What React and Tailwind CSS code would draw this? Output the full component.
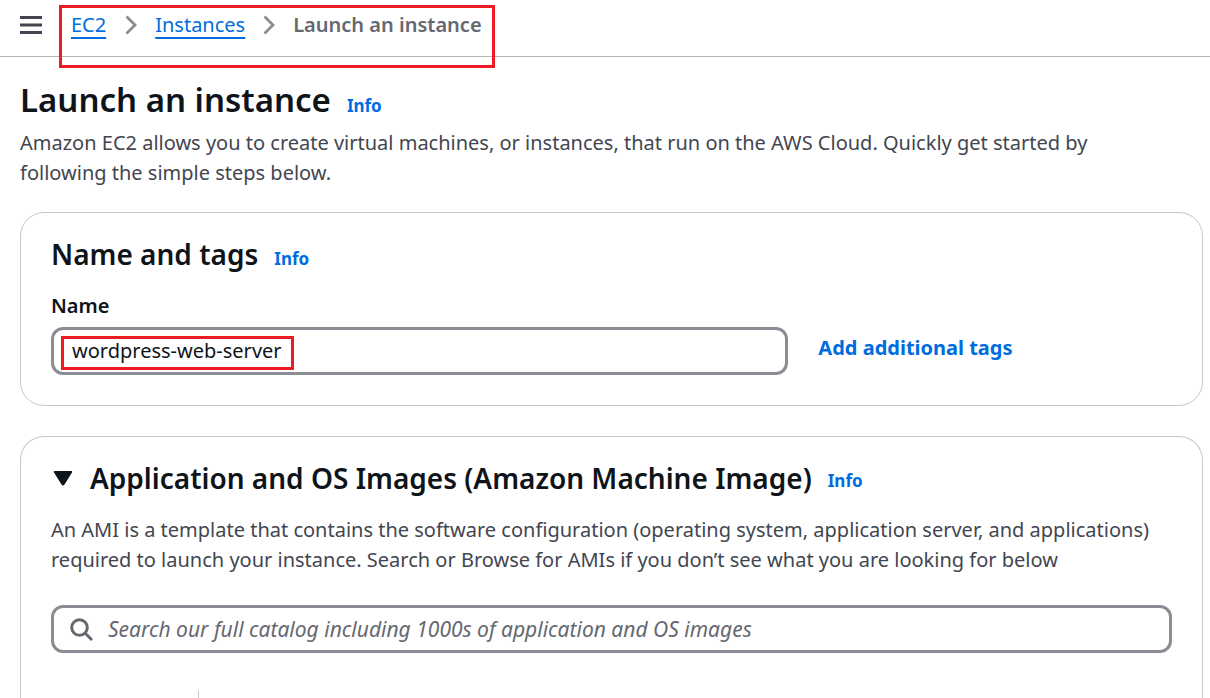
import React from 'react';

function InfoLink() {
  return (
    <a href="#info" className="text-[17px] leading-6 font-bold text-[#006ce0]">
      Info
    </a>
  );
}

function Chevron() {
  return (
    <svg viewBox="0 0 12 20" className="h-5 w-3 shrink-0" fill="none" stroke="#8c8c94" strokeWidth="2.8" aria-hidden="true">
      <path d="M1.500 1.500 10 10l-8.500 8.500" />
    </svg>
  );
}

function TopBar() {
  return (
    <header className="flex h-[57px] items-start border-b border-[#b4b4bb] pl-5">
      <button type="button" aria-label="Open navigation" className="mt-[15px] shrink-0">
        <svg viewBox="0 0 22 20" className="h-5 w-[22px]" fill="#424650" aria-hidden="true">
          <rect x="0" y="1" width="22" height="3" />
          <rect x="0" y="8.500" width="22" height="3" />
          <rect x="0" y="16" width="22" height="3" />
        </svg>
      </button>
      <nav aria-label="Breadcrumb" className="relative ml-[29px] pt-[10px]">
        <ol className="flex items-center gap-[18px] text-[20px] leading-[30px] text-[#006ce0]">
          <li className="flex items-center gap-[19px]">
            <a href="#ec2" className="underline decoration-2 underline-offset-[5px]">EC2</a>
            <Chevron />
          </li>
          <li className="flex items-center gap-[18px]">
            <a href="#instances" className="underline decoration-2 underline-offset-[5px]">Instances</a>
            <Chevron />
          </li>
          <li className="font-semibold text-[#656871]" aria-current="page">Launch an instance</li>
        </ol>
        <span className="pointer-events-none absolute top-[5px] -right-[13px] -left-3 h-[63px] border-3 border-[#ed1c24]" />
      </nav>
    </header>
  );
}

export default function App() {
  return (
    <div className="flex min-h-screen flex-col bg-white font-['Noto_Sans',sans-serif] text-[20px] leading-[30px] text-[#424650]">
      <TopBar />
      <main className="flex grow flex-col pt-[22px] pr-[7px] pl-5">
        <div className="flex items-baseline gap-4">
          <h1 className="text-[33px] leading-[42px] font-semibold text-[#0f141a]">Launch an instance</h1>
          <InfoLink />
        </div>
        <p className="mt-[7px] pr-[60px]">
          Amazon EC2 allows you to create virtual machines, or instances, that run on the AWS Cloud. Quickly get started by following the simple steps below.
        </p>

        <section className="mt-6 rounded-3xl border border-[#c6c6cd] px-[30px] pt-[23px] pb-[30px]">
          <div className="flex items-baseline gap-4">
            <h2 className="text-[28px] leading-9 font-semibold text-[#0f141a]">Name and tags</h2>
            <InfoLink />
          </div>
          <label htmlFor="name" className="mt-[19px] block font-semibold text-[#0f141a]">Name</label>
          <div className="mt-[6px] grid grid-cols-12 gap-x-[30px]">
            <div className="relative col-span-8">
              <input
                id="name"
                type="text"
                defaultValue="wordpress-web-server"
                className="block h-12 w-full rounded-xl border-3 border-[#8c8c94] px-[18px] pb-[2px] text-[#0f141a] outline-none"
              />
              <span className="pointer-events-none absolute top-[9px] left-[10px] h-[34px] w-[233px] border-3 border-[#ed1c24]" />
            </div>
            <button type="button" className="col-span-4 self-start pt-[6px] text-left font-bold text-[#006ce0]">
              Add additional tags
            </button>
          </div>
        </section>

        <section className="mt-[30px] flex grow flex-col rounded-t-3xl border border-b-0 border-[#c6c6cd] px-[30px] pt-[23px]">
          <div className="flex items-baseline gap-4">
            <h2 className="text-[28px] leading-9 font-semibold text-[#0f141a]">
              <button type="button" aria-expanded="true" className="flex items-center gap-[18px] text-left">
                <svg viewBox="0 0 21 18" className="h-[18px] w-[21px] shrink-0" fill="#0f141a" aria-hidden="true">
                  <path d="M4 2h16q2 0 1 1.500L13.500 15.500q-1.500 2-3 0L3 3.500Q2 2 4 2Z" />
                </svg>
                Application and OS Images (Amazon Machine Image)
              </button>
            </h2>
            <InfoLink />
          </div>
          <p className="mt-[19px]">
            An AMI is a template that contains the software configuration (operating system, application server, and applications) required to launch your instance. Search or Browse for AMIs if you don’t see what you are looking for below
          </p>
          <div className="mt-[30px] flex h-12 items-center gap-[15px] rounded-xl border-3 border-[#8c8c94] px-4">
            <svg viewBox="0 0 23 23" className="h-[23px] w-[23px] shrink-0" fill="none" stroke="#656871" strokeWidth="3" aria-hidden="true">
              <circle cx="9.500" cy="9.500" r="7.800" />
              <path d="m15 15 7 7" />
            </svg>
            <input
              type="search"
              aria-label="Search images"
              placeholder="Search our full catalog including 1000s of application and OS images"
              className="w-full text-[21px] outline-none placeholder:text-[#656871] placeholder:italic"
            />
          </div>
          <div className="mt-[37px] ml-[147px] min-h-2 grow border-l border-[#c6c6cd]" />
        </section>
      </main>
    </div>
  );
}
